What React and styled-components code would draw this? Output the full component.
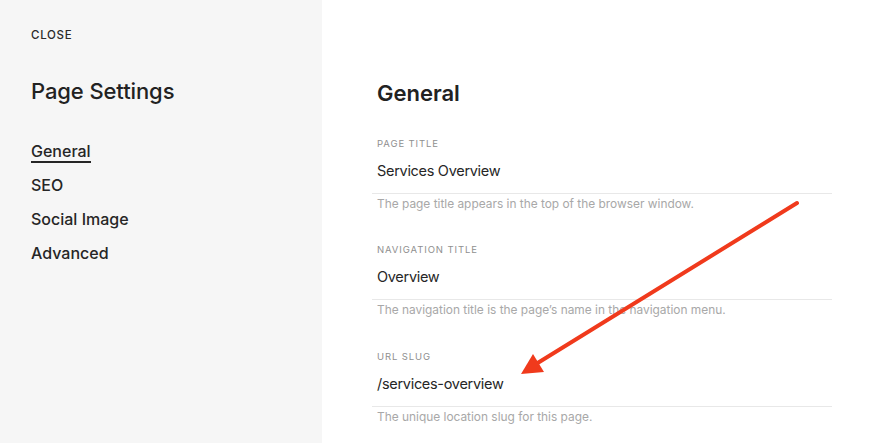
import styled, { createGlobalStyle } from "styled-components"

const GlobalStyle = createGlobalStyle`
    html, body {
        margin: 0;
        padding: 0;
        background: #ffffff;
        font-family: Inter, "Liberation Sans", sans-serif;
        color: #222222;
    }
`

const fields = [
    {
        label: "Page Title",
        value: "Services Overview",
        help: "The page title appears in the top of the browser window.",
    },
    {
        label: "Navigation Title",
        value: "Overview",
        help: "The navigation title is the page’s name in the navigation menu.",
    },
    {
        label: "URL Slug",
        value: "/services-overview",
        help: "The unique location slug for this page.",
    },
]

const navItems = ["General", "SEO", "Social Image", "Advanced"]

export default function App() {
    return (
        <>
            <GlobalStyle />
            <Screen>
                <Sidebar>
                    <Close>Close</Close>
                    <SidebarTitle>Page Settings</SidebarTitle>
                    <Nav>
                        {navItems.map((item, i) => (
                            <NavItem key={item} $active={i === 0}>
                                {item}
                            </NavItem>
                        ))}
                    </Nav>
                </Sidebar>
                <Main>
                    <Heading>General</Heading>
                    {fields.map((f) => (
                        <Field key={f.label}>
                            <Label>{f.label}</Label>
                            <Value>{f.value}</Value>
                            <Help>{f.help}</Help>
                        </Field>
                    ))}
                </Main>
                <Arrow viewBox="0 0 880 443" width="880" height="443">
                    <line
                        x1="797"
                        y1="203"
                        x2="536"
                        y2="364"
                        stroke="#f03a1c"
                        strokeWidth="4"
                        strokeLinecap="round"
                    />
                    <polygon points="521,374 533,354 544,372" fill="#f03a1c" />
                </Arrow>
            </Screen>
        </>
    )
}

const Screen = styled.div`
    position: relative;
    display: flex;
    width: 880px;
    height: 443px;
    overflow: hidden;
`

const Sidebar = styled.aside`
    flex: 0 0 322px;
    box-sizing: border-box;
    padding: 28px 0 0 31px;
    background: #f6f6f6;
`

const Close = styled.div`
    font-size: 11.5px;
    line-height: 14px;
    font-weight: 500;
    letter-spacing: 0.7px;
    text-transform: uppercase;
    color: #2a2a2a;
`

const SidebarTitle = styled.h2`
    margin: 35px 0 0;
    font-size: 22px;
    line-height: 28px;
    font-weight: 500;
    letter-spacing: -0.1px;
    color: #222;
`

const Nav = styled.nav`
    display: flex;
    flex-direction: column;
    align-items: flex-start;
    gap: 14px;
    margin-top: 36px;
`

const NavItem = styled.span`
    box-sizing: border-box;
    height: ${({ $active }) => ($active ? "22px" : "20px")};
    margin-bottom: ${({ $active }) => ($active ? "-2px" : "0")};
    font-size: 16px;
    line-height: 20px;
    font-weight: 500;
    color: #262626;
    border-bottom: ${({ $active }) => ($active ? "2px solid #262626" : "none")};
`

const Main = styled.main`
    flex: 1;
    box-sizing: border-box;
    padding: 79px 48px 0 50px;
`

const Heading = styled.h1`
    margin: 0 0 0 5px;
    font-size: 22px;
    line-height: 28px;
    font-weight: 600;
    color: #222;
`

const Field = styled.section`
    margin-top: 32.5px;

    &:first-of-type {
        margin-top: 30.5px;
    }
`

const Label = styled.div`
    padding-left: 5px;
    font-size: 9.5px;
    line-height: 12px;
    letter-spacing: 0.9px;
    text-transform: uppercase;
    color: #8f8f8f;
`

const Value = styled.div`
    margin-top: 11px;
    padding: 0 0 12px 5px;
    font-size: 14.5px;
    line-height: 20px;
    letter-spacing: -0.3px;
    color: #262626;
    border-bottom: 1px solid #e8e8e8;
`

const Help = styled.div`
    margin-top: 2px;
    padding-left: 5px;
    font-size: 11.9px;
    line-height: 16px;
    color: #a8a8a8;
`

const Arrow = styled.svg`
    position: absolute;
    left: 0;
    top: 0;
    pointer-events: none;
`
